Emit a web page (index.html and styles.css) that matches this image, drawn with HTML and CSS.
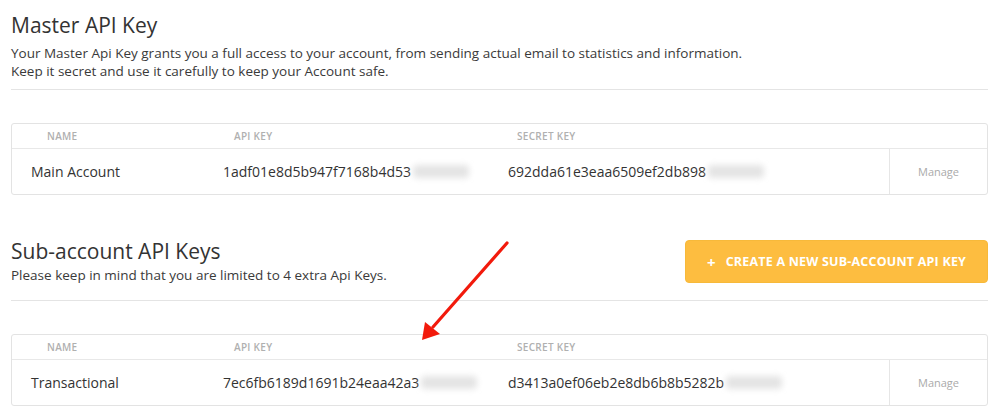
FILE: index.html
```html
<!DOCTYPE html>
<html>
<head>
<meta charset="utf-8">
<link rel="stylesheet" href="styles.css">
</head>
<body>
<div class="page">
  <section class="section master">
    <h1 class="title">Master API Key</h1>
    <p class="desc">Your Master Api Key grants you a full access to your account, from sending actual email to statistics and information.<br>Keep it secret and use it carefully to keep your Account safe.</p>
    <div class="rule"></div>
    <div class="table">
      <div class="th c1">Name</div>
      <div class="th c2">API Key</div>
      <div class="th c3">Secret Key</div>
      <div class="th c4"></div>
      <div class="td c1">Main Account</div>
      <div class="td c2">1adf01e8d5b947f7168b4d53<span class="blur"></span></div>
      <div class="td c3">692dda61e3eaa6509ef2db898<span class="blur"></span></div>
      <div class="td c4 manage">Manage</div>
    </div>
  </section>

  <section class="section sub">
    <div class="subhead">
      <div>
        <h2 class="title">Sub-account API Keys</h2>
        <p class="desc">Please keep in mind that you are limited to 4 extra Api Keys.</p>
      </div>
      <button class="create"><span class="plus">+</span>Create a new sub-account API key</button>
    </div>
    <div class="rule"></div>
    <div class="table">
      <div class="th c1">Name</div>
      <div class="th c2">API Key</div>
      <div class="th c3">Secret Key</div>
      <div class="th c4"></div>
      <div class="td c1">Transactional</div>
      <div class="td c2">7ec6fb6189d1691b24eaa42a3<span class="blur"></span></div>
      <div class="td c3">d3413a0ef06eb2e8db6b8b5282b<span class="blur"></span></div>
      <div class="td c4 manage">Manage</div>
    </div>
  </section>
</div>
<svg class="arrow" width="1000" height="418" viewBox="0 0 1000 418">
  <line x1="507" y1="243" x2="433" y2="327" stroke="#f21a0c" stroke-width="3.2" stroke-linecap="round"/>
  <polygon points="422,340 425,322 440,334" fill="#f21a0c"/>
</svg>
</body>
</html>
```

FILE: styles.css
```css
html, body {
  margin: 0;
  padding: 0;
  background: #fff;
}
body {
  font-family: "Open Sans", "Noto Sans", sans-serif;
  color: #333;
  width: 1000px;
  height: 418px;
  overflow: hidden;
  position: relative;
}
.page {
  padding: 12px 12px 0 11px;
}
.title {
  margin: 0;
  font-weight: 400;
  font-size: 21px;
  line-height: 26px;
  color: #333;
}
.desc {
  margin: 6px 0 0;
  font-size: 13.5px;
  line-height: 18px;
  color: #3a3a3a;
}
.rule {
  height: 1px;
  background: #e4e4e4;
}
.master .rule {
  margin-top: 9px;
}
.table {
  display: grid;
  grid-template-columns: 199px 286px 1fr 98px;
  grid-template-rows: 25px 45px;
  border: 1px solid #e3e3e3;
  border-radius: 3px;
  margin-top: 33px;
}
.th {
  font-size: 10px;
  font-weight: 600;
  text-transform: uppercase;
  letter-spacing: 0.3px;
  color: #b0b0b0;
  display: flex;
  align-items: center;
  border-bottom: 1px solid #e8e8e8;
}
.td {
  font-size: 14px;
  color: #333;
  display: flex;
  align-items: center;
}
.th.c1 { padding-left: 35px; }
.th.c2 { padding-left: 23px; }
.th.c3 { padding-left: 20px; }
.td.c1 { padding-left: 19px; }
.td.c2 { padding-left: 12px; }
.td.c3 { padding-left: 11px; }
.td.c4 {
  border-left: 1px solid #e6e6e6;
  justify-content: center;
}
.manage {
  font-size: 11px;
  color: #aaa;
}
.blur {
  display: inline-block;
  width: 56px;
  height: 13px;
  margin-left: 2px;
  background: #e4e4e4;
  filter: blur(3px);
  border-radius: 4px;
}
.sub {
  margin-top: 42px;
}
.subhead {
  display: flex;
  justify-content: space-between;
  align-items: flex-start;
}
.sub .title {
  margin-top: 1px;
}
.sub .desc {
  margin-top: 2px;
}
.create {
  margin-top: 3px;
  width: 303px;
  height: 43px;
  border: 1px solid #f7b93a;
  border-radius: 4px;
  background: #fdbd40;
  color: #fff;
  font-family: "Open Sans", "Noto Sans", sans-serif;
  font-weight: 700;
  font-size: 12.5px;
  text-transform: uppercase;
  letter-spacing: 0.2px;
  display: flex;
  align-items: center;
  justify-content: center;
  padding: 0;
}
.plus {
  font-size: 15px;
  margin-right: 10px;
  font-weight: 700;
}
.sub .rule {
  margin-top: 16px;
}
.arrow {
  position: absolute;
  left: 0;
  top: 0;
  pointer-events: none;
}
```
